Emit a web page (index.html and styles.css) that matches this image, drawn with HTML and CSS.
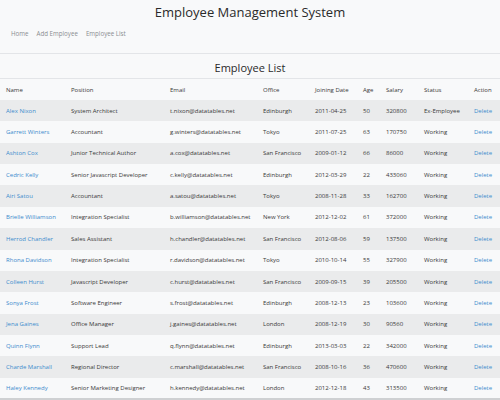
FILE: index.html
```html
<!DOCTYPE html>
<html>
<head>
<meta charset="utf-8">
<link rel="stylesheet" href="styles.css">
</head>
<body>
<header class="top">
  <h1 class="title">Employee Management System</h1>
  <nav class="nav">
    <a href="#">Home</a>
    <a href="#">Add Employee</a>
    <a href="#">Employee List</a>
  </nav>
</header>
<main class="content">
  <h2 class="subtitle">Employee List</h2>
  <table class="emp">
    <colgroup>
      <col class="c1"><col class="c2"><col class="c3"><col class="c4"><col class="c5"><col class="c6"><col class="c7"><col class="c8"><col class="c9">
    </colgroup>
    <thead>
      <tr><th>Name</th><th>Position</th><th>Email</th><th>Office</th><th>Joining Date</th><th>Age</th><th>Salary</th><th>Status</th><th>Action</th></tr>
    </thead>
    <tbody>
      <tr><td><a href="#">Alex Nixon</a></td><td>System Architect</td><td>t.nixon@datatables.net</td><td>Edinburgh</td><td>2011-04-25</td><td>50</td><td>320800</td><td>Ex-Employee</td><td><a href="#">Delete</a></td></tr>
      <tr><td><a href="#">Garrett Winters</a></td><td>Accountant</td><td>g.winters@datatables.net</td><td>Tokyo</td><td>2011-07-25</td><td>63</td><td>170750</td><td>Working</td><td><a href="#">Delete</a></td></tr>
      <tr><td><a href="#">Ashton Cox</a></td><td>Junior Technical Author</td><td>a.cox@datatables.net</td><td>San Francisco</td><td>2009-01-12</td><td>66</td><td>86000</td><td>Working</td><td><a href="#">Delete</a></td></tr>
      <tr><td><a href="#">Cedric Kelly</a></td><td>Senior Javascript Developer</td><td>c.kelly@datatables.net</td><td>Edinburgh</td><td>2012-03-29</td><td>22</td><td>433060</td><td>Working</td><td><a href="#">Delete</a></td></tr>
      <tr><td><a href="#">Airi Satou</a></td><td>Accountant</td><td>a.satou@datatables.net</td><td>Tokyo</td><td>2008-11-28</td><td>33</td><td>162700</td><td>Working</td><td><a href="#">Delete</a></td></tr>
      <tr><td><a href="#">Brielle Williamson</a></td><td>Integration Specialist</td><td>b.williamson@datatables.net</td><td>New York</td><td>2012-12-02</td><td>61</td><td>372000</td><td>Working</td><td><a href="#">Delete</a></td></tr>
      <tr><td><a href="#">Herrod Chandler</a></td><td>Sales Assistant</td><td>h.chandler@datatables.net</td><td>San Francisco</td><td>2012-08-06</td><td>59</td><td>137500</td><td>Working</td><td><a href="#">Delete</a></td></tr>
      <tr><td><a href="#">Rhona Davidson</a></td><td>Integration Specialist</td><td>r.davidson@datatables.net</td><td>Tokyo</td><td>2010-10-14</td><td>55</td><td>327900</td><td>Working</td><td><a href="#">Delete</a></td></tr>
      <tr><td><a href="#">Colleen Hurst</a></td><td>Javascript Developer</td><td>c.hurst@datatables.net</td><td>San Francisco</td><td>2009-09-15</td><td>39</td><td>205500</td><td>Working</td><td><a href="#">Delete</a></td></tr>
      <tr><td><a href="#">Sonya Frost</a></td><td>Software Engineer</td><td>s.frost@datatables.net</td><td>Edinburgh</td><td>2008-12-13</td><td>23</td><td>103600</td><td>Working</td><td><a href="#">Delete</a></td></tr>
      <tr><td><a href="#">Jena Gaines</a></td><td>Office Manager</td><td>j.gaines@datatables.net</td><td>London</td><td>2008-12-19</td><td>30</td><td>90560</td><td>Working</td><td><a href="#">Delete</a></td></tr>
      <tr><td><a href="#">Quinn Flynn</a></td><td>Support Lead</td><td>q.flynn@datatables.net</td><td>Edinburgh</td><td>2013-03-03</td><td>22</td><td>342000</td><td>Working</td><td><a href="#">Delete</a></td></tr>
      <tr><td><a href="#">Charde Marshall</a></td><td>Regional Director</td><td>c.marshall@datatables.net</td><td>San Francisco</td><td>2008-10-16</td><td>36</td><td>470600</td><td>Working</td><td><a href="#">Delete</a></td></tr>
      <tr><td><a href="#">Haley Kennedy</a></td><td>Senior Marketing Designer</td><td>h.kennedy@datatables.net</td><td>London</td><td>2012-12-18</td><td>43</td><td>313500</td><td>Working</td><td><a href="#">Delete</a></td></tr>
    </tbody>
  </table>
</main>
</body>
</html>
```
FILE: styles.css
```css
html, body {
  margin: 0;
  padding: 0;
  background: #f8f9fa;
  font-family: "Open Sans", "Noto Sans", sans-serif;
  color: #333;
  overflow: hidden;
}

.top {
  border-bottom: 1px solid #e3e5e8;
  height: 54px;
  box-sizing: border-box;
}

.title {
  margin: 0;
  padding-top: 1px;
  height: 23px;
  line-height: 22px;
  text-align: center;
  font-size: 13px;
  font-weight: 400;
  color: #2a2a2a;
}

.nav {
  display: flex;
  gap: 8px;
  padding: 5px 0 0 11px;
  font-size: 6.2px;
  line-height: 10px;
}

.nav a {
  color: #8a8d90;
  text-decoration: none;
}

.content {
  display: block;
}

.subtitle {
  margin: 0;
  height: 25px;
  line-height: 28px;
  text-align: center;
  font-size: 11px;
  font-weight: 400;
  color: #2a2a2a;
  border-bottom: 1px solid #e3e5e8;
  box-sizing: border-box;
}

.emp {
  width: 500px;
  table-layout: fixed;
  border-collapse: collapse;
  font-size: 6px;
  border-bottom: 2px solid #cfd1d3;
}

.c1 { width: 65px; }
.c2 { width: 99px; }
.c3 { width: 93px; }
.c4 { width: 52px; }
.c5 { width: 48px; }
.c6 { width: 23px; }
.c7 { width: 38px; }
.c8 { width: 50px; }
.c9 { width: 32px; }

.emp th,
.emp td {
  padding: 0 0 0 6px;
  text-align: left;
  font-weight: 400;
  white-space: nowrap;
  overflow: hidden;
  color: #383838;
}

.emp thead tr {
  height: 21px;
}

.emp tbody tr {
  height: 21.36px;
}

.emp tbody tr:nth-child(odd) {
  background: #eaebec;
}

.emp a {
  color: #3d8bcd;
  text-decoration: none;
}
```
